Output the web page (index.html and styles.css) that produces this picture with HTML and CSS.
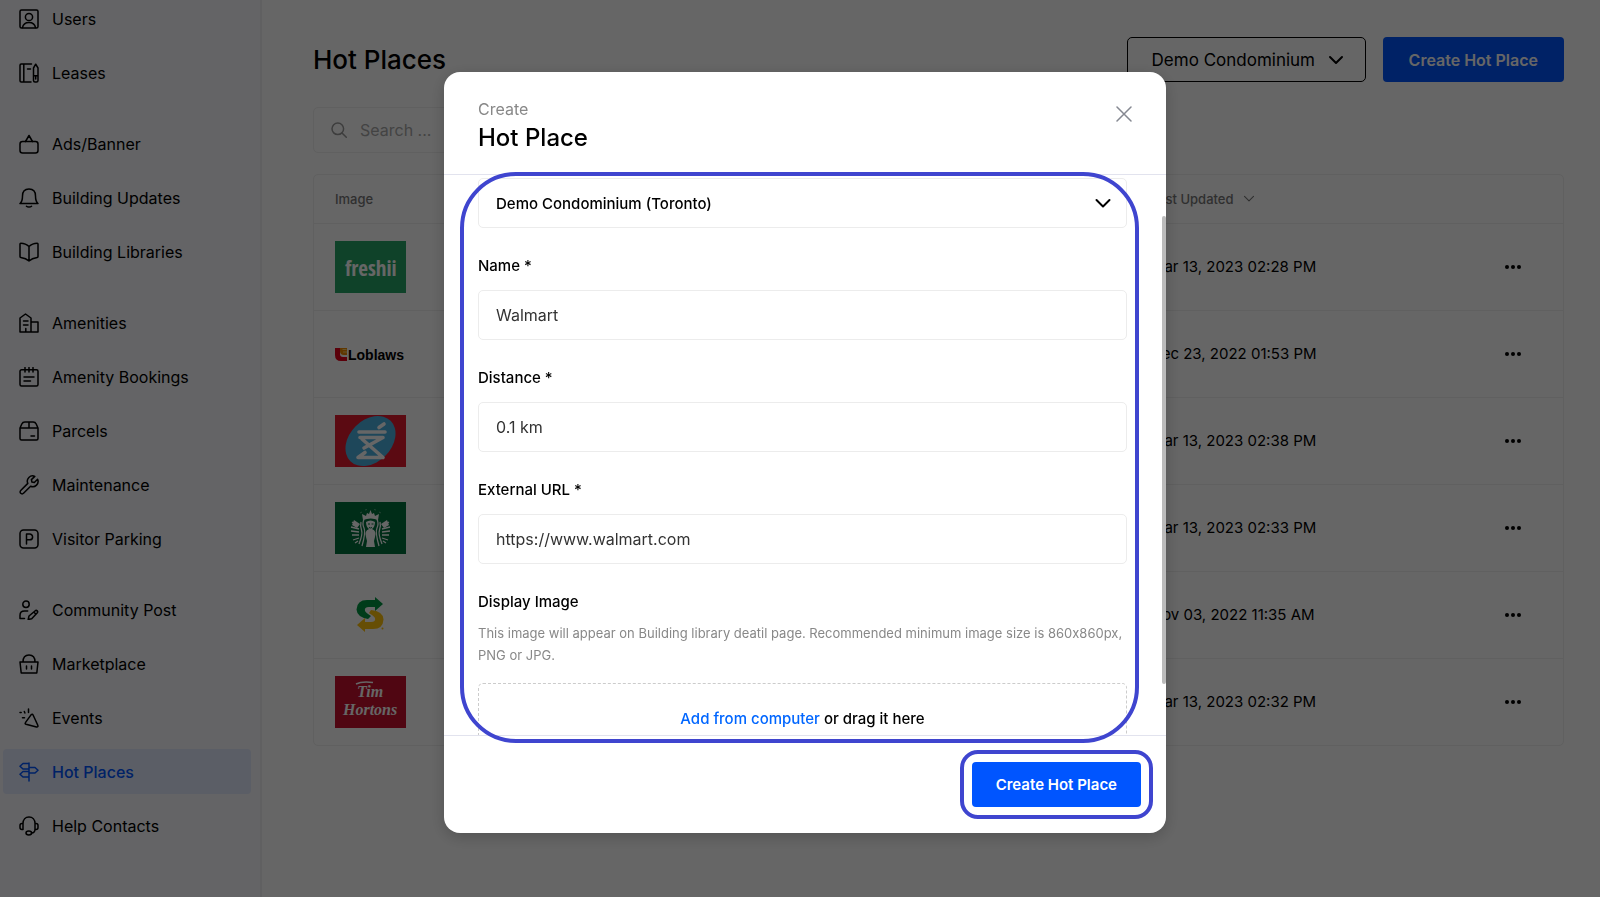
FILE: index.html
```html
<!DOCTYPE html>
<html lang="en">
<head>
    <meta charset="UTF-8">
    <meta name="viewport" content="width=device-width, initial-scale=1.0">
    <title>Hot Places</title>
    <link rel="stylesheet" href="styles.css">
</head>
<body>
    <div class="app">
        <nav class="sidebar">
            <div class="nav-group">
                <a href="#" class="nav-item">
                    <svg class="icon" viewBox="0 0 20 20"><rect x="1" y="1" width="18" height="18" rx="1.5"/><circle cx="10" cy="8" r="3.6"/><path d="M3.5 18.6c.6-3.4 3-5.2 6.500-5.200s5.900 1.800 6.500 5.200"/></svg>
                    Users
                </a>
                <a href="#" class="nav-item">
                    <svg class="icon" viewBox="0 0 20 20"><path d="M12.500 1H2.200Q1 1 1 2.200v15.600Q1 19 2.200 19h9.800M4.800 1v18M8.500 6h3"/><path d="M14.500 5l2.200-3.800L19 5v12.500q0 1.500-1.500 1.500H16q-1.500 0-1.500-1.500zM14.500 12.800H19M16.700 13v3"/></svg>
                    Leases
                </a>
            </div>
            <div class="nav-group">
                <a href="#" class="nav-item">
                    <svg class="icon" viewBox="0 0 20 20"><rect x="1" y="7.500" width="18" height="11.500" rx="2.500"/><path d="M6.500 7.500L10 1.500l3.500 6"/></svg>
                    Ads/Banner
                </a>
                <a href="#" class="nav-item">
                    <svg class="icon" viewBox="0 0 20 20"><path d="M1 15.500h18c-2-1.500-2.500-3-2.500-7.500C16.500 3.500 13.800 1 10 1S3.500 3.500 3.500 8c0 4.500-.5 6-2.500 7.500zM7.500 18.200c1.200 1.200 3.800 1.200 5 0"/></svg>
                    Building Updates
                </a>
                <a href="#" class="nav-item">
                    <svg class="icon" viewBox="0 0 20 20"><path d="M10 4.500C8 2.500 5 1.200 1.800 1.200q-.8 0-.8.8v12.500q0 .8.8.9C5 15.800 8 17 10 19c2-2 5-3.200 8.200-3.600q.8-.1.8-.9V2q0-.8-.8-.8C15 1.200 12 2.500 10 4.500zV19"/></svg>
                    Building Libraries
                </a>
            </div>
            <div class="nav-group">
                <a href="#" class="nav-item">
                    <svg class="icon" viewBox="0 0 20 20"><path d="M12 19V5L6.500 1 1 5v14h18V9h-7M4.500 8h4.500M4.500 12h4.500M6.800 19v-3.500M12 19V9"/></svg>
                    Amenities
                </a>
                <a href="#" class="nav-item">
                    <svg class="icon" viewBox="0 0 20 20"><rect x="1" y="2.800" width="18" height="16.200" rx="1.500"/><path d="M6 .5v4.500M10 .5v4.500M14 .5v4.500M5 10h10M5 14h6.500"/></svg>
                    Amenity Bookings
                </a>
                <a href="#" class="nav-item">
                    <svg class="icon" viewBox="0 0 20 20"><path d="M1 7l1.800-4Q3.700 1 5.800 1h8.400q2.100 0 3 2L19 7v10.500q0 1.500-1.500 1.500h-15Q1 19 1 17.500V7H19M10 1v6M12 15h3.500"/></svg>
                    Parcels
                </a>
                <a href="#" class="nav-item">
                    <svg class="icon" viewBox="0 0 20 20"><path d="M15.800 1.400a5.300 5.300 0 0 0-7 7L1.700 15.500a1.800 1.800 0 0 0 2.800 2.800l7.100-7.100a5.300 5.300 0 0 0 7-7l-3.300 3.300-2.400-.5-.5-2.400z"/></svg>
                    Maintenance
                </a>
                <a href="#" class="nav-item">
                    <svg class="icon" viewBox="0 0 20 20"><rect x="1" y="1" width="18" height="18" rx="3.500"/><path d="M7.500 15V5h3.200a2.900 2.900 0 0 1 0 5.800H7.500"/></svg>
                    Visitor Parking
                </a>
            </div>
            <div class="nav-group">
                <a href="#" class="nav-item">
                    <svg class="icon" viewBox="0 0 20 20"><circle cx="7" cy="4.200" r="3.200"/><path d="M1 18.500v-3.300C1 12.500 3 11 5.500 11h3.200M1 18.500h4.500M10 16l6.300-5.300q1-.7 1.900.2t.1 1.900l-5.600 6-3.500.7zM14.800 12l2.200 2.200"/></svg>
                    Community Post
                </a>
                <a href="#" class="nav-item">
                    <svg class="icon" viewBox="0 0 20 20"><path d="M1 8h18l-1.200 11H2.200zM4 8c0-4.500 2.500-7 6-7s6 2.500 6 7M7.500 12v3M12.500 12v3"/></svg>
                    Marketplace
                </a>
                <a href="#" class="nav-item">
                    <svg class="icon" viewBox="0 0 20 20"><path d="M12.200 6.600q1.300-.9 2 .6l4.600 10q.7 2-1.300 1.800L7 16.200q-1.500-.5-.4-1.800zM9.500 1v3.500M5.300 3.500l.6 1.500M1 4.500h1.200M3.500 9.800h2"/></svg>
                    Events
                </a>
                <a href="#" class="nav-item active">
                    <svg class="icon" viewBox="0 0 20 20"><path d="M10 1v18M10 1.500H4L1 4.200 4 7h6M10 5.500h6l3 2.800-3 2.700h-6M10 9.500H4l-3 2.700L4 15h6"/></svg>
                    Hot Places
                </a>
                <a href="#" class="nav-item">
                    <svg class="icon" viewBox="0 0 20 20"><path d="M4 7.500C4 3.500 6.500 1 10 1s6 2.500 6 6.500V13c0 2.500-1.500 4-3.500 4M4 7.500H3q-2 0-2 2v2q0 2 2 2h1zM16 7.500h1q2 0 2 2v2q0 2-2 2h-1"/><ellipse cx="9.800" cy="17" rx="2.800" ry="1.900"/></svg>
                    Help Contacts
                </a>
            </div>
        </nav>

        <main class="content">
            <header class="page-header">
                <h1>Hot Places</h1>
                <div class="select-wrap building-select">
                    <select aria-label="Building">
                        <option>Demo Condominium</option>
                    </select>
                    <svg class="chevron" viewBox="0 0 16 16"><path d="M2 5l6 6 6-6"/></svg>
                </div>
                <button class="btn">Create Hot Place</button>
            </header>

            <div class="search">
                <svg class="search-icon" viewBox="0 0 16 16"><circle cx="6.800" cy="6.800" r="5.800"/><path d="M11 11l4.300 4.300"/></svg>
                <input type="search" aria-label="Search" placeholder="Search ...">
            </div>

            <div class="table-wrap">
                <table>
                    <thead>
                        <tr>
                            <th class="col-image">Image</th>
                            <th>Last Updated <svg class="sort" viewBox="0 0 16 16"><path d="M2 4.500l6 6 6-6"/></svg></th>
                            <th class="col-menu"></th>
                        </tr>
                    </thead>
                    <tbody>
                        <tr>
                            <td><svg class="logo" viewBox="0 0 71 52"><rect width="71" height="52" fill="#27a567"/><text x="10" y="35" class="logo-freshii">freshii</text></svg></td>
                            <td>Mar 13, 2023 02:28 PM</td>
                            <td><button class="dots" aria-label="Actions"><svg viewBox="0 0 18 6"><circle cx="3" cy="3" r="2"/><circle cx="9" cy="3" r="2"/><circle cx="15" cy="3" r="2"/></svg></button></td>
                        </tr>
                        <tr>
                            <td><svg class="logo" viewBox="0 0 71 52"><path d="M0 20h5v6q0 3 3 3h4v4H6q-6 0-6-6z" fill="#e3001b"/><path d="M5 20h7v7H9q-4 0-4-4z" fill="#f08a00"/><path d="M7.500 21.500h4M8 24h4" stroke="#fbd36a" fill="none"/><text x="13" y="32" class="logo-loblaws">Loblaws</text></svg></td>
                            <td>Dec 23, 2022 01:53 PM</td>
                            <td><button class="dots" aria-label="Actions"><svg viewBox="0 0 18 6"><circle cx="3" cy="3" r="2"/><circle cx="9" cy="3" r="2"/><circle cx="15" cy="3" r="2"/></svg></button></td>
                        </tr>
                        <tr>
                            <td><svg class="logo" viewBox="0 0 71 52"><rect width="71" height="52" fill="#e31b2d"/><ellipse cx="35.500" cy="26" rx="21" ry="28.500" transform="rotate(45 35.500 26)" fill="#4db1e0"/><path d="M44 12.500l5-3.500M24 17h26M25 22.500h23L29 33M27 24l21 18.500H23l7-5" fill="none" stroke="#fff" stroke-width="3.600" stroke-linecap="round" stroke-linejoin="round"/></svg></td>
                            <td>Mar 13, 2023 02:38 PM</td>
                            <td><button class="dots" aria-label="Actions"><svg viewBox="0 0 18 6"><circle cx="3" cy="3" r="2"/><circle cx="9" cy="3" r="2"/><circle cx="15" cy="3" r="2"/></svg></button></td>
                        </tr>
                        <tr>
                            <td><svg class="logo" viewBox="0 0 71 52"><rect width="71" height="52" fill="#00703c"/>
                                <g fill="none" stroke="#fff" stroke-width="1.300"><path d="M29 17q-2 5 0 9t-2 18M26 20q-1 4 .5 8T24 42M42 17q2 5 0 9t2 18M45 20q1 4-.5 8t2.500 14M23 24l-6-4M24 27l-8-2M24 30l-8-1M24 33l-7 0M24 36l-6 2M23 39l-3 2M48 24l6-4M47 27l8-2M47 30l8-1M47 33l7 0M47 36l6 2M48 39l3 2"/></g>
                                <path d="M28 18l-1-6 4 2 1-3 2 1 1.500-4L37 12l2-1 1 3 4-2-1 6q-7-3-15 0zM19 18l6 4-3 4-5-3zM52 18l-6 4 3 4 5-3zM31 20q4.500-3 9 0 0 5-3 7 5 2 3 8l-1 4 1 6h-9l1-6-1-4q-2-6 3-8-3-2-3-7z" fill="#fff"/><path d="M33 22h2M36.500 22h2M34 25.500q1.500 1 3 0" stroke="#00703c" fill="none"/><path d="M25 11l2-1M30 8l2-.5M39 7.500l2 .5M44 10l2 1" stroke="#5da582" fill="none"/></svg></td>
                            <td>Mar 13, 2023 02:33 PM</td>
                            <td><button class="dots" aria-label="Actions"><svg viewBox="0 0 18 6"><circle cx="3" cy="3" r="2"/><circle cx="9" cy="3" r="2"/><circle cx="15" cy="3" r="2"/></svg></button></td>
                        </tr>
                        <tr>
                            <td><svg class="logo" viewBox="0 0 71 52"><path d="M40 8l8 7-8 7v-4h-6q-5 0-4 4 1 2 6 5l-3 3q-11-2-11.500-9.500Q22 11 32 11h8z" fill="#009743"/><path d="M30 43l-8-7 8-7v4h6q5 0 4-4-1-2-6-5l2-3q12 1 12.500 9.500Q48 40 38 40h-8z" fill="#ffc20d"/><circle cx="47.500" cy="39.500" r="1" fill="#ffc20d"/></svg></td>
                            <td>Nov 03, 2022 11:35 AM</td>
                            <td><button class="dots" aria-label="Actions"><svg viewBox="0 0 18 6"><circle cx="3" cy="3" r="2"/><circle cx="9" cy="3" r="2"/><circle cx="15" cy="3" r="2"/></svg></button></td>
                        </tr>
                        <tr>
                            <td><svg class="logo" viewBox="0 0 71 52"><rect width="71" height="52" fill="#c8102e"/><text x="22" y="21" class="logo-tim">Tim</text><text x="8" y="39" class="logo-tim">Hortons</text><path d="M21 8q6-3 17-1.500" stroke="#fff" stroke-width="1.500" fill="none"/></svg></td>
                            <td>Mar 13, 2023 02:32 PM</td>
                            <td><button class="dots" aria-label="Actions"><svg viewBox="0 0 18 6"><circle cx="3" cy="3" r="2"/><circle cx="9" cy="3" r="2"/><circle cx="15" cy="3" r="2"/></svg></button></td>
                        </tr>
                    </tbody>
                </table>
            </div>
        </main>
    </div>

    <div class="overlay">
        <div class="modal" role="dialog" aria-modal="true" aria-labelledby="modal-title">
            <div class="modal-header">
                <div>
                    <p>Create</p>
                    <h2 id="modal-title">Hot Place</h2>
                </div>
                <button class="close" aria-label="Close"><svg viewBox="0 0 16 16"><path d="M1 1l14 14M15 1L1 15"/></svg></button>
            </div>

            <form class="modal-body" id="place-form">
                <div class="form-group">
                    <div class="select-wrap">
                        <select class="field" aria-label="Select building">
                            <option>Demo Condominium (Toronto)</option>
                        </select>
                        <svg class="chevron" viewBox="0 0 16 16"><path d="M1.500 5L8 11.500 14.500 5"/></svg>
                    </div>
                </div>
                <div class="form-group">
                    <label for="name">Name *</label>
                    <input class="field" type="text" id="name" value="Walmart">
                </div>
                <div class="form-group">
                    <label for="distance">Distance *</label>
                    <input class="field" type="text" id="distance" value="0.1 km">
                </div>
                <div class="form-group">
                    <label for="url">External URL *</label>
                    <input class="field" type="text" id="url" value="https://www.walmart.com">
                </div>
                <div class="form-group">
                    <h3>Display Image</h3>
                    <p class="hint">This image will appear on Building library deatil page. Recommended minimum image size is 860x860px, PNG or JPG.</p>
                    <div class="dropzone"><a href="#">Add from computer</a> or drag it here</div>
                </div>
            </form>

            <div class="modal-footer">
                <div class="highlight-btn">
                    <button class="btn" form="place-form" type="button">Create Hot Place</button>
                </div>
            </div>
            <div class="scroll-thumb"></div>
            <div class="highlight-form"></div>
        </div>
    </div>
</body>
</html>
```

FILE: styles.css
```css
* {
    box-sizing: border-box;
}
body {
    margin: 0;
    font-family: Inter, "Liberation Sans", sans-serif;
    font-size: 16px;
    color: #000;
    background: #fff;
    overflow: hidden;
}
h1, h2, h3, p {
    margin: 0;
    font-weight: 500;
}
a {
    color: inherit;
    text-decoration: none;
}
button, input, select {
    font: inherit;
    color: inherit;
}
button {
    border: none;
    background: none;
    padding: 0;
    cursor: pointer;
}
svg {
    display: block;
}
.icon, .chevron, .sort, .search-icon, .close svg {
    fill: none;
    stroke: currentColor;
    stroke-width: 1.5;
    stroke-linecap: round;
    stroke-linejoin: round;
}
.app {
    display: flex;
    height: 100vh;
}

/* sidebar */
.sidebar {
    flex: 0 0 262px;
    display: flex;
    flex-direction: column;
    justify-content: flex-end;
    gap: 26px;
    padding: 0 9px 49px 3px;
    background: #f9fafe;
    border-right: 2px solid #f0f0f2;
    overflow: hidden;
}
.nav-group {
    display: flex;
    flex-direction: column;
    gap: 9px;
}
.nav-item {
    display: flex;
    align-items: center;
    gap: 13px;
    height: 45px;
    padding-left: 16px;
    border-radius: 4px;
}
.nav-item.active {
    background: #e3eaff;
    color: #0055ff;
    font-weight: 500;
}
.icon {
    width: 20px;
    height: 20px;
}

/* page */
.content {
    flex: 1;
    padding: 37px 36px 0 51px;
}
.page-header {
    display: flex;
    align-items: center;
    gap: 17px;
}
h1 {
    flex: 1;
    font-size: 26px;
}
.btn {
    height: 45px;
    padding: 0 26px;
    border-radius: 4px;
    background: #0055ff;
    color: #fff;
    font-weight: 600;
}
.select-wrap {
    position: relative;
}
.select-wrap select {
    appearance: none;
    background: #fff;
    width: 100%;
}
.select-wrap .chevron {
    position: absolute;
    top: 0;
    bottom: 0;
    right: 16px;
    width: 16px;
    height: 16px;
    margin: auto 0;
    stroke-width: 2;
    pointer-events: none;
}
.building-select select {
    height: 45px;
    padding: 0 49px 0 24px;
    border: 1px solid #000;
    border-radius: 5px;
    font-size: 17px;
}
.building-select .chevron {
    right: 22px;
}
.search {
    display: flex;
    align-items: center;
    gap: 13px;
    width: 400px;
    height: 46px;
    margin: 25px 0 21px;
    padding: 0 17px;
    border: 1px solid #efefef;
    border-radius: 5px;
}
.search-icon {
    width: 16px;
    height: 16px;
    color: #999;
}
.search input {
    border: none;
    outline: none;
    background: none;
    padding: 0;
}
.search input::placeholder {
    color: #a8a8a8;
}
.table-wrap {
    border: 1px solid #efefef;
    border-radius: 5px;
}
table {
    width: 100%;
    border-collapse: collapse;
    table-layout: fixed;
}
th {
    height: 48px;
    padding: 0;
    text-align: left;
    font-size: 13px;
    font-weight: 500;
    color: #777;
}
td {
    height: 87px;
    padding: 0;
    border-top: 1px solid #efefef;
    font-size: 15px;
}
th:first-child, td:first-child {
    padding-left: 21px;
}
.col-image {
    width: 67%;
}
.col-menu {
    width: 100px;
}
.sort {
    display: inline-block;
    width: 12px;
    height: 12px;
    margin-left: 6px;
    vertical-align: -1px;
}
.dots {
    display: block;
    margin: 0 auto;
}
.dots svg {
    width: 18px;
    height: 6px;
}
.logo {
    width: 71px;
    height: 52px;
}
.logo-freshii {
    font: 21px "Open Sans Condensed", "Liberation Sans Narrow", "DejaVu Sans Condensed", sans-serif;
    fill: #fff;
}
.logo-loblaws {
    font: bold 14px "Liberation Sans", sans-serif;
}
.logo-tim {
    font: italic bold 16px "Liberation Serif", serif;
    fill: #fff;
}

/* modal */
.overlay {
    position: fixed;
    inset: 0;
    display: flex;
    align-items: center;
    justify-content: center;
    padding: 8px 0 0 10px;
    background: rgba(0, 0, 0, 0.6);
}
.modal {
    position: relative;
    display: flex;
    flex-direction: column;
    width: 722px;
    max-width: 100%;
    height: calc(100vh - 136px);
    background: #fff;
    border-radius: 16px;
    box-shadow: 0 4px 16px rgba(0, 0, 0, 0.2);
}
.modal-header {
    display: flex;
    justify-content: space-between;
    padding: 25px 34px 19px;
    border-bottom: 1px solid #e2e3ee;
}
.modal-header p {
    color: #888;
    line-height: 24px;
    font-weight: 400;
}
.modal-header h2 {
    font-size: 24px;
    line-height: 34px;
}
.close {
    align-self: flex-start;
    padding: 9px 0;
    color: #858891;
}
.close svg {
    width: 16px;
    height: 16px;
}
.modal-body {
    flex: 1;
    min-height: 0;
    overflow: hidden;
    padding: 3px 39px 0 34px;
}
.form-group {
    margin-bottom: 26px;
}
.form-group label, .form-group h3 {
    display: block;
    margin-bottom: 12px;
    font-size: 15px;
    font-weight: 500;
    line-height: 24px;
}
.field {
    display: block;
    width: 100%;
    height: 50px;
    padding: 0 17px;
    border: 1px solid #ececec;
    border-radius: 5px;
    color: #333;
}
select.field {
    color: #000;
    font-size: 15px;
    font-weight: 500;
}
.form-group h3 {
    margin-bottom: 8px;
}
.hint {
    margin-bottom: 17px;
    font-size: 13px;
    font-weight: 400;
    font-feature-settings: "calt" 0;
    line-height: 22px;
    color: #888;
}
.dropzone {
    height: 160px;
    padding-top: 23px;
    border: 1px dashed #ccc;
    border-radius: 5px;
    text-align: center;
    font-size: 15px;
    font-weight: 500;
    line-height: 24px;
}
.dropzone a {
    color: #0066ff;
}
.modal-footer {
    display: flex;
    justify-content: flex-end;
    padding: 14px 13px;
    border-top: 1px solid #e2e3ee;
}
.highlight-btn {
    padding: 8px;
    border: 4px solid #3f45cf;
    border-radius: 18px;
}
.modal-footer .btn {
    display: block;
    padding: 0 24px;
    font-size: 15px;
}
.highlight-form {
    position: absolute;
    top: 100px;
    right: 27px;
    bottom: 90px;
    left: 16px;
    border: 4px solid #3f45cf;
    border-radius: 56px;
    pointer-events: none;
}
.scroll-thumb {
    position: absolute;
    top: 144px;
    right: 0;
    bottom: 149px;
    width: 4px;
    border-radius: 2px;
    background: #bbb;
}
```
